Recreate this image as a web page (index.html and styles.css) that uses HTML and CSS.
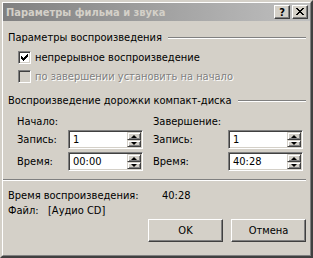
FILE: index.html
```html
<!DOCTYPE html>
<html lang="ru">
<head>
    <meta charset="UTF-8">
    <title>Параметры фильма и звука</title>
    <link rel="stylesheet" href="styles.css">
</head>
<body>
    <div class="window">
        <div class="frame">
            <!-- Title bar (inactive) -->
            <div class="titlebar">
                <span class="title">Параметры фильма и звука</span>
                <div class="caption-buttons">
                    <span class="cap-btn help">?</span>
                    <span class="cap-btn">
                        <svg width="8" height="7" viewBox="0 0 8 7" shape-rendering="crispEdges"><path d="M0 0h2v1h-2z M6 0h2v1h-2z M1 1h2v1h-2z M5 1h2v1h-2z M2 2h4v1h-4z M3 3h2v1h-2z M2 4h4v1h-4z M1 5h2v1h-2z M5 5h2v1h-2z M0 6h2v1h-2z M6 6h2v1h-2z" fill="#000"/></svg>
                    </span>
                </div>
            </div>

            <div class="content">
                <div class="group-head">
                    <span>Параметры воспроизведения</span>
                    <span class="etch"></span>
                </div>
                <div class="check-row first">
                    <span class="check">
                        <svg width="7" height="7" viewBox="0 0 7 7" shape-rendering="crispEdges"><path d="M0 2h1v3h-1z M1 3h1v3h-1z M2 4h1v3h-1z M3 3h1v3h-1z M4 2h1v3h-1z M5 1h1v3h-1z M6 0h1v3h-1z" fill="#000"/></svg>
                    </span>
                    <span>непрерывное воспроизведение</span>
                </div>
                <div class="check-row disabled">
                    <span class="check"></span>
                    <span>по завершении установить на начало</span>
                </div>

                <div class="group-head second">
                    <span>Воспроизведение дорожки компакт-диска</span>
                    <span class="etch"></span>
                </div>

                <div class="track">
                    <span class="label col-start">Начало:</span>
                    <span class="label col-end">Завершение:</span>

                    <span class="label">Запись:</span>
                    <div class="spin-field"><span class="value">1</span><span class="spinner"><span class="spin up"></span><span class="spin down"></span></span></div>
                    <span class="label col-end">Запись:</span>
                    <div class="spin-field"><span class="value">1</span><span class="spinner"><span class="spin up"></span><span class="spin down"></span></span></div>

                    <span class="label">Время:</span>
                    <div class="spin-field"><span class="value">00:00</span><span class="spinner"><span class="spin up"></span><span class="spin down"></span></span></div>
                    <span class="label col-end">Время:</span>
                    <div class="spin-field"><span class="value">40:28</span><span class="spinner"><span class="spin up"></span><span class="spin down"></span></span></div>
                </div>

                <div class="separator"></div>

                <div class="info-row">
                    <span class="info-label wide">Время воспроизведения:</span>
                    <span>40:28</span>
                </div>
                <div class="info-row file">
                    <span class="info-label">Файл:</span>
                    <span>[Аудио CD]</span>
                </div>

                <div class="buttons">
                    <button class="btn">OK</button>
                    <button class="btn">Отмена</button>
                </div>
            </div>
        </div>
    </div>
</body>
</html>
```

FILE: styles.css
```css
/* Classic Windows dialog */
html, body {
    margin: 0;
    padding: 0;
    background-color: #d4d0c8;
}

body {
    font-family: "DejaVu Sans Condensed", "DejaVu Sans", sans-serif;
    font-stretch: condensed;
    font-size: 11px;
    line-height: 13px;
    color: #000;
}

.window {
    width: 313px;
    height: 258px;
    box-sizing: border-box;
    border: 2px solid;
    border-color: #d4d0c8 #404040 #404040 #d4d0c8;
}

.frame {
    height: 100%;
    box-sizing: border-box;
    border: 1px solid;
    border-color: #ffffff #808080 #808080 #ffffff;
    display: flex;
    flex-direction: column;
}

/* Title bar */
.titlebar {
    height: 18px;
    display: flex;
    align-items: center;
    justify-content: space-between;
    background: linear-gradient(to right, #808080, #c0c0c0);
    padding: 0 2px 0 3px;
}

.title {
    color: #d4d0c8;
    font-weight: bold;
}

.caption-buttons {
    display: flex;
    gap: 2px;
}

.cap-btn {
    width: 16px;
    height: 14px;
    box-sizing: border-box;
    background-color: #d4d0c8;
    border: 1px solid;
    border-color: #ffffff #404040 #404040 #ffffff;
    box-shadow: inset -1px -1px #808080;
    display: flex;
    align-items: center;
    justify-content: center;
    font-weight: bold;
    font-size: 11px;
    line-height: 11px;
}

.cap-btn svg {
    margin-bottom: 1px;
}

/* Body */
.content {
    flex: 1;
    padding: 10px 4px 0 5px;
}

.group-head {
    display: flex;
    align-items: center;
    height: 13px;
}

.group-head.second {
    margin-top: 11px;
}

.etch {
    flex: 1;
    height: 0;
    border-top: 1px solid #808080;
    border-bottom: 1px solid #ffffff;
    margin-left: 6px;
}

.check-row {
    display: flex;
    align-items: center;
    height: 13px;
    margin-top: 6px;
    margin-left: 10px;
    gap: 4px;
}

.check-row.first {
    margin-top: 7px;
}

.check {
    width: 13px;
    height: 13px;
    box-sizing: border-box;
    background-color: #fff;
    border: 1px solid;
    border-color: #808080 #ffffff #ffffff #808080;
    box-shadow: inset 1px 1px #404040, inset -1px -1px #d4d0c8;
    display: flex;
    align-items: center;
    justify-content: center;
}

.check-row.disabled {
    color: #808080;
    text-shadow: 1px 1px #ffffff;
}

.check-row.disabled .check {
    background-color: #d4d0c8;
}

/* Track start / end grid */
.track {
    display: grid;
    grid-template-columns: 51px 75px 10px 75px 75px;
    grid-template-rows: 13px 19px 19px;
    row-gap: 2px;
    margin: 8px 0 0 9px;
}

.track .label {
    display: flex;
    align-items: center;
    grid-column: 1;
}

.track .col-end {
    grid-column: 4;
}

.track .col-start {
    grid-column: 1 / 3;
}

.track .label + .spin-field {
    grid-column: span 1;
}

.track .col-end + .spin-field {
    grid-column: 5;
}

.track > :nth-child(n+7) {
    margin-top: 1px;
}

.spin-field {
    display: flex;
    box-sizing: border-box;
    height: 19px;
    background-color: #fff;
    border: 1px solid;
    border-color: #808080 #ffffff #ffffff #808080;
    box-shadow: inset 1px 1px #404040, inset -1px -1px #d4d0c8;
    padding: 1px;
}

.value {
    flex: 1;
    padding-left: 3px;
    display: flex;
    align-items: center;
}

.spinner {
    width: 14px;
    display: flex;
    flex-direction: column;
}

.spin {
    flex: 1;
    box-sizing: border-box;
    background-color: #d4d0c8;
    border: 1px solid;
    border-color: #d4d0c8 #404040 #404040 #d4d0c8;
    box-shadow: inset 1px 1px #ffffff, inset -1px -1px #808080;
    display: flex;
    align-items: center;
    justify-content: center;
}

.spin.up {
    flex: 0 0 8px;
}

.spin::after {
    content: "";
    width: 0;
    height: 0;
    border-left: 3px solid transparent;
    border-right: 3px solid transparent;
}

.spin.up::after {
    border-bottom: 3px solid #000;
}

.spin.down::after {
    border-top: 3px solid #000;
}

.separator {
    height: 0;
    border-top: 1px solid #808080;
    border-bottom: 1px solid #ffffff;
    margin: 9px 0 0 -5px;
}

.info-row {
    display: flex;
    height: 13px;
    margin-top: 8px;
}

.info-row.file {
    margin-top: 2px;
}

.info-label {
    width: 40px;
}

.info-label.wide {
    width: 154px;
}

.buttons {
    display: flex;
    justify-content: flex-end;
    gap: 8px;
    margin-top: 2px;
}

.btn {
    width: 75px;
    height: 23px;
    padding: 0;
    font: inherit;
    color: #000;
    background-color: #d4d0c8;
    border: 1px solid;
    border-color: #ffffff #404040 #404040 #ffffff;
    box-shadow: inset -1px -1px #808080;
}
```
